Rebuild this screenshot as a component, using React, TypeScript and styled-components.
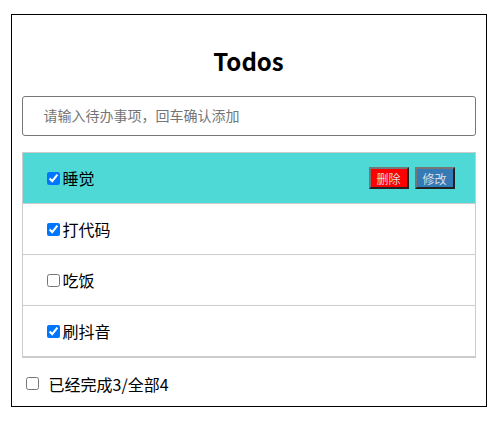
import React, { useState } from "react";
import styled, { createGlobalStyle } from "styled-components";

const Global = createGlobalStyle`
  body {
    margin: 0;
    font-family: "Noto Sans CJK SC", "Noto Sans", sans-serif;
    background: #fff;
    color: #000;
  }
`;

const Container = styled.div`
  box-sizing: border-box;
  width: 476px;
  margin: 14px auto 0;
  border: 1px solid #000;
  padding: 10px;
`;

const Title = styled.h1`
  margin: 18px 0 17px;
  font-size: 24px;
  line-height: 36px;
  font-weight: 700;
  text-align: center;
`;

const Input = styled.input`
  box-sizing: border-box;
  display: block;
  width: 100%;
  height: 40px;
  border: 1px solid #767676;
  border-radius: 3px;
  padding: 0 0 3px 21px;
  font-size: 14px;
  font-family: inherit;
  outline: none;
  &::placeholder {
    color: #757575;
  }
`;

const List = styled.ul`
  list-style: none;
  margin: 16px 0 0;
  padding: 0;
  border: 1px solid #ccc;
  border-bottom-width: 2px;
`;

const Row = styled.li<{ $active?: boolean }>`
  display: flex;
  align-items: center;
  height: 50px;
  padding: 0 20px;
  background: ${(p) => (p.$active ? "#4fd9d6" : "#fff")};
  border-bottom: 1px solid #ccc;
  &:last-child {
    border-bottom: none;
  }
`;

const Label = styled.label`
  display: flex;
  align-items: center;
  font-size: 16px;
  flex: 1;
`;

const Check = styled.input`
  margin: 3px 3px 3px 4px;
`;

const Btn = styled.button<{ $bg: string }>`
  width: 40px;
  height: 22px;
  padding: 0;
  margin-left: 6px;
  font-size: 12px;
  font-family: inherit;
  color: #ddd;
  background: ${(p) => p.$bg};
  border: 2px outset #767676;
`;

const Footer = styled.div`
  display: flex;
  align-items: center;
  height: 25px;
  margin-top: 13px;
  font-size: 16px;
`;

const FootCheck = styled.input`
  margin: 0 10px 0 4px;
`;

const initial = [
  { id: 1, name: "睡觉", done: true },
  { id: 2, name: "打代码", done: true },
  { id: 3, name: "吃饭", done: false },
  { id: 4, name: "刷抖音", done: true },
];

export default function App() {
  const [todos, setTodos] = useState(initial);
  const done = todos.filter((t) => t.done).length;
  return (
    <>
      <Global />
      <Container>
        <Title>Todos</Title>
        <Input placeholder="请输入待办事项，回车确认添加" />
        <List>
          {todos.map((t, i) => (
            <Row key={t.id} $active={i === 0}>
              <Label>
                <Check
                  type="checkbox"
                  checked={t.done}
                  onChange={() =>
                    setTodos(todos.map((x) => (x.id === t.id ? { ...x, done: !x.done } : x)))
                  }
                />
                {t.name}
              </Label>
              {i === 0 && (
                <>
                  <Btn $bg="#ff0000">删除</Btn>
                  <Btn $bg="#337ab7">修改</Btn>
                </>
              )}
            </Row>
          ))}
        </List>
        <Footer>
          <FootCheck type="checkbox" checked={done === todos.length} readOnly />
          已经完成{done}/全部{todos.length}
        </Footer>
      </Container>
    </>
  );
}
